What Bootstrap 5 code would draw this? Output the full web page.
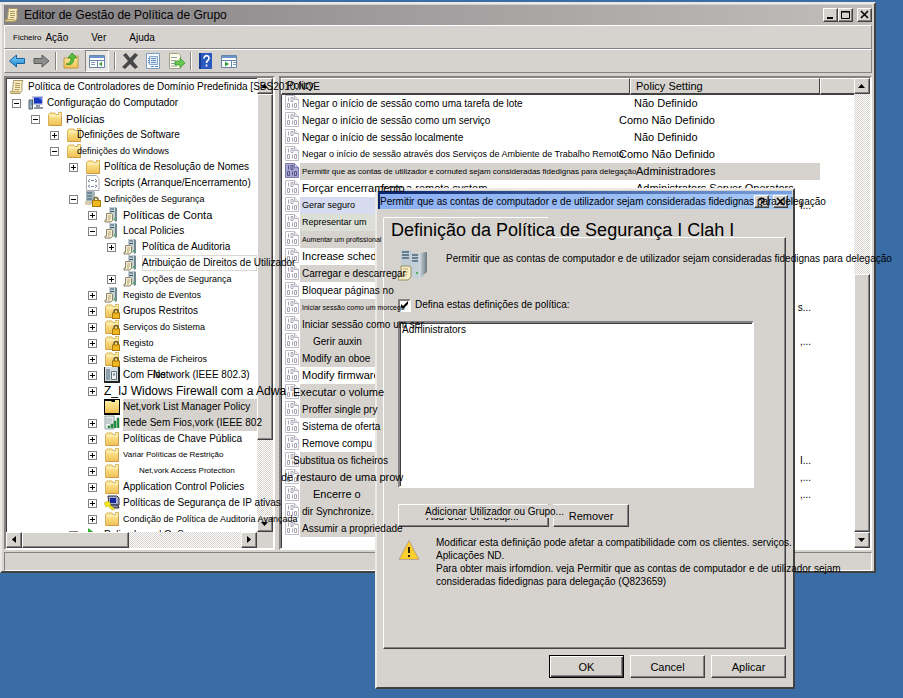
<!DOCTYPE html>
<html lang="pt">
<head>
<meta charset="utf-8">
<meta name="viewport" content="width=device-width, initial-scale=1">
<title>Editor de Gestão de Política de Grupo</title>
<link href="https://cdn.jsdelivr.net/npm/bootstrap@5.3.0/dist/css/bootstrap.min.css" rel="stylesheet">
<style>
:root{--face:#d6d3ce;--dark:#424142;--mid:#848284}
body{background:#3a6da5;font:10px/16px "Liberation Sans",Arial,sans-serif;color:#000;overflow:hidden}
.desktop{min-height:100vh}
.t7{font-size:7px}.t8{font-size:8px}.t9{font-size:9px}.t11{font-size:11px}.t12{font-size:12px}
.over{position:relative;z-index:3}
.grow-0w{flex:1 1 0;width:0;min-width:0}
.raised{background:var(--face);border:1px solid;border-color:#fff var(--dark) var(--dark) #fff;box-shadow:inset -1px -1px 0 var(--mid)}
.sunken{border:2px solid;border-color:var(--mid) #fff #fff var(--mid);box-shadow:inset 1px 1px 0 var(--dark)}
.win{background:var(--face);border:2px solid;border-color:#eceae6 var(--dark) var(--dark) #eceae6}
.main-win{inset:2px 27px 125px 0;padding:0 2px}
.main-title{height:20px;margin-top:1px;background:linear-gradient(90deg,#848184,#c1bdbb)}
.sysbtn{width:15px;height:14px;padding:0;line-height:0}
.bar-strip{height:24px;border:1px solid;border-color:#fff var(--mid) var(--mid) #fff}
.bar-strip button{border:0;background:none;padding:0;color:#000}
.menu-strip{gap:23px;padding-top:2px}
.tool-strip{gap:5px}
.tool-strip svg{width:18px;height:18px;display:block}
.tool-strip .pressed{border:1px solid;border-color:var(--mid) #fff #fff var(--mid);background:#eae8e5;padding:1px 2px}
.vsep{width:2px;height:18px;border-left:1px solid var(--mid);border-right:1px solid #fff}
.panes{min-height:0;gap:4px;margin-top:3px}
.tree-pane{flex:0 0 271px;min-width:0;background:#fff}
.tree-body{min-height:0}
.list-pane{background:#fff}
.tree-view{overflow-x:visible;overflow-y:clip;min-height:0;padding-top:1px}
.tree-view ul{list-style:none;margin:0;padding:0 0 0 19px}
.tree-view>ul{padding-left:6px}
.tree-row{display:flex;align-items:center;height:16px;white-space:nowrap}
.tree-root{padding-left:3px}
.tree-row svg{width:16px;height:16px;margin-right:3px;flex:none}
.expander{width:9px;height:9px;padding:0;margin-right:7px;flex:none;border:1px solid #848284;background:#fff;display:flex}
.tree-row .expander svg{width:7px;height:7px;margin:0}
.leaf{padding-left:16px}
.tuck{margin-left:-8px}
.chip{background:#d6d3ce;flex:1 1 0;min-width:0}
.chosen{flex:1 1 0;min-width:0;outline:1px solid #dcd9d4;outline-offset:-1px}
.stub{display:inline-block;width:30px}
.stub-wide{display:inline-block;width:79px}
.track{background:repeating-conic-gradient(#fff 0 25%,#d6d3ce 0 50%) 0 0/2px 2px}
.sbtn{width:16px;height:16px;padding:0;flex:none;display:flex;align-items:center;justify-content:center}
.vbar{width:16px;flex:none}
.corner-row{background:var(--face)}
.status-strip{height:19px;margin-top:2px;border:1px solid;border-color:var(--mid) #fff #fff var(--mid)}
.pol{table-layout:fixed;width:100%;margin:0;border-collapse:separate;border-spacing:0}
.pol th{height:17px;line-height:14px;font-weight:400;background:var(--face);padding:0 5px;border:solid;border-width:1px 1px 2px;border-color:#fff var(--dark) var(--dark) #fff}
.pol th:last-child{border-right:0}
.pol td{height:17px;padding:0 0 0 4px;line-height:17px;white-space:nowrap;vertical-align:top}
.pol td:nth-child(3){padding:0}
.pol .cell{display:flex;height:17px}
.pol .cell svg{width:14px;height:15px;margin-right:1px;flex:none}
.pol .cell>span{flex:1;padding-left:2px;min-width:0;height:17px}
.pol .cell>.tint{background:#d6d3ce}.pol .cell>.tint-blue{background:#d6dbef}.pol .cell>.tint-green{background:#dcdfd6}
.pol .cell>.inset-more{padding-left:13px}
.ml-out{margin-left:-9px}.ml-far{margin-left:-21px}
.col-wide{width:349px}.col-set{width:190px}
.pol .lead-in{padding-left:6px}.pol .lead-out{text-indent:-15px}
.pol .tail{text-align:right;padding-right:9px}
.selcell{background:#d6d3ce}
.dlg{left:375px;top:188px;width:420px;z-index:2;padding:1px 1px 9px}
.dlg-title{height:18px;border-top:3px solid #16388c;border-left:2px solid #0a246a;border-image:linear-gradient(90deg,#0a246a,#7ba2e0) 3 0 0 2;background:linear-gradient(90deg,#8cb0f4,#a6c8f5);white-space:nowrap}
.dlg-title .sysbtn{height:13px}
.dlg-body{padding:8px 6px 0 5px}
.tab-head{height:20px;width:165px;border:solid #fff;border-width:1px 0 0 1px;font-size:18px;line-height:24px;padding-left:7px;white-space:nowrap;border-top-left-radius:2px}
.tab-page{border:1px solid;border-color:#fff var(--dark) var(--dark) #fff;box-shadow:inset -1px -1px 0 var(--mid);padding:11px 31px 60px 14px}
.tab-cover{border-top:1px solid var(--face);width:164px;margin:-12px 0 11px -14px}
.desc{line-height:20px}
.check-real{appearance:none;width:13px;height:13px;margin:0;border:2px solid;border-color:var(--mid) #fff #fff var(--mid);background:#fff}
.check-real:checked{background:#fff url("data:image/svg+xml,%3Csvg xmlns='http://www.w3.org/2000/svg' viewBox='0 0 9 9'%3E%3Cpath d='M1 3v3l2 2 5-5V0L3 5z'/%3E%3C/svg%3E") center/9px no-repeat}
.members{height:167px;display:block;width:100%;background:#fff;padding:1px 2px;font-size:10px;overflow:hidden;border-radius:0;outline:0}
.members option{padding:0;line-height:15px;min-height:15px;color:#000}
.btn95{height:23px;padding:0;color:#000;line-height:20px;font-size:11px}
.btn-add{width:151px;font-size:10px}.btn-rem{width:76px}.btn-act{width:75px}
.add-old{display:block;padding-top:2px;padding-right:2px}
.add-new{position:absolute;left:26px;top:0;height:13px;line-height:13px;background:var(--face);white-space:nowrap}
.default{border:1px solid #000;box-shadow:inset 1px 1px 0 #fff,inset -1px -1px 0 var(--dark),inset -2px -2px 0 var(--mid)}
.note{line-height:13px;white-space:nowrap;padding-top:1px}
.dlg-foot{gap:6px;margin-top:6px}
</style>
</head>
<body>
<svg width="0" height="0" class="position-absolute" aria-hidden="true">
<defs>
<linearGradient id="gf" x1="0" y1="0" x2="0" y2="1"><stop offset="0" stop-color="#fff0a8"/><stop offset="1" stop-color="#f0c050"/></linearGradient>
<linearGradient id="gb" x1="0" y1="0" x2="0" y2="1"><stop offset="0" stop-color="#7fd0f8"/><stop offset="1" stop-color="#1c84d0"/></linearGradient>
<linearGradient id="gs" x1="0" y1="0" x2="1" y2="0"><stop offset="0" stop-color="#d8e0e6"/><stop offset="1" stop-color="#687880"/></linearGradient>
</defs>
<symbol id="folder" viewBox="0 0 16 16"><path d="M1.500 3.500 3 2h5l1 1.500h2.500V1.500h3V14.500h-13z" fill="url(#gf)" stroke="#d8b058"/><path d="M12 2.500h2M2.500 5h12" stroke="#fff6cc"/><path d="M14.500 5v9.500h-12" fill="none" stroke="#c89c48"/></symbol>
<symbol id="lockfolder" viewBox="0 0 16 16"><use href="#folder"/><path d="M10 10V8.500a2 2 0 0 1 4 0V10" fill="none" stroke="#6a5a20" stroke-width="1.500"/><rect x="8.500" y="10" width="7" height="5.500" fill="#f0b820" stroke="#a87808"/></symbol>
<symbol id="server" viewBox="0 0 16 16"><path d="M5 0h6v14H5z" fill="#c4d0d6"/><path d="M11 0l2 1v13l-2 1z" fill="#708890"/><path d="M6 2h4M6 4.500h4" stroke="#38586c"/><path d="M10 12h2" stroke="#50b060" stroke-width="2"/><path d="M2.500 6.500h5l1 1v6l-1.500 1.500h-6v-2h1.500z" fill="#f8f0d4" stroke="#8a8468"/><path d="M4 9h3M4 11h3M4 13h2" stroke="#b0a070"/></symbol>
<symbol id="servlock" viewBox="0 0 16 16"><path d="M1 0h8l1 1v12H1z" fill="#a8b8c0"/><path d="M2 2h5M2 5h5M2 8h5" stroke="#38586c"/><path d="M0 10h6v4H0z" fill="#d8ccb0"/><path d="M9 10V8.500a2 2 0 0 1 4 0V10" fill="none" stroke="#7a6420" stroke-width="1.500"/><rect x="7.500" y="9.500" width="8" height="6" fill="#f0b820" stroke="#a87808"/></symbol>
<symbol id="scroll" viewBox="0 0 16 16"><path d="M4.500 1.500h9.500l-1 2v8l-2 3H2l1.500-3z" fill="#f8ecc4" stroke="#a89868"/><path d="M6 4.500h5M6 6.500h5M6 8.500h5M5.500 10.500h5" stroke="#b09858"/><path d="M1 12.500h9v2H2z" fill="#e8d498" stroke="#a08c50" stroke-width=".7"/></symbol>
<symbol id="pc" viewBox="0 0 16 16"><path d="M4 1h11v9H4z" fill="#c4c8e0"/><path d="M6 2.500h8v6H6z" fill="#1838c0"/><path d="M10 2.500h4v3z" fill="#5880f0"/><path d="M8 10h4v2H8zM6 12h9v2H6z" fill="#9098a8"/><path d="M1 5h3.500v9H1z" fill="#a8b4bc" stroke="#50606c"/><path d="M2 7h2M2 9h2" stroke="#308cc0"/></symbol>
<symbol id="script" viewBox="0 0 16 16"><path d="M1.500.5h10l2.500 3v12H1.500z" fill="#fff" stroke="#a8acb0"/><path d="M3 6l2-2M3 6l2 1M12 6l-2-2M12 6l-2 1M6 5.500h3M3 11l2-1M3 11l2 2M12 11l-2-1M12 11l-2 2M6 11.500h3" stroke="#8088a8" fill="none"/></symbol>
<symbol id="netcard" viewBox="0 0 16 16"><path d="M0 0h16v16H0z" fill="#222"/><path d="M1 0h13v14H1z" fill="#d4dce0"/><path d="M2 2h4v11H2z" fill="#8ca0ac"/><path d="M7.500 4.500h5v8h-5z" fill="#eef2f4" stroke="#607480"/><path d="M9 6.500h2v2H9z" fill="#70889c"/></symbol>
<symbol id="bfolder" viewBox="0 0 16 16"><path d="M0 0h16v16H0z"/><path d="M1 2h6l1 1h3V1h4v13H1z" fill="url(#gf)"/></symbol>
<symbol id="wifi" viewBox="0 0 16 16"><path d="M1 1h9v13H1z" fill="#e8ecec" stroke="#90a0a0"/><path d="M2 4h6M2 6h6M2 8h5" stroke="#a0b0b0"/><path d="M4 13V11h2v2M7 13V9h2v4M10 13V6h2v7M13 13V3h2v10" fill="#289848" stroke="#187030" stroke-width=".5"/></symbol>
<symbol id="ipsec" viewBox="0 0 16 16"><path d="M4 1h9l2 2v7H5z" fill="#a8acc8" stroke="#303040"/><path d="M6 3h6v5H6z" fill="#1828a0"/><path d="M6 10h8l1 3H7z" fill="#8890a0" stroke="#303040"/><path d="M0 8l4-2 3 3-1 1 5 4-3 1-4-4-2 1z" fill="#f4e420" stroke="#b0a010" stroke-width=".5"/></symbol>
<symbol id="cert" viewBox="0 0 16 16"><path d="M3 1v12l8-6z" fill="#30b030"/></symbol>
<symbol id="bits" viewBox="0 0 14 15"><path d="M.5.5h9l4 4v10H.5z" fill="#fff" stroke="#c0bcc8"/><path d="M9.500.5v4h4" fill="#eeecf2" stroke="#b4b0bc"/><path d="M3.500 2.500v4M6 2.500h2v4H6zM2.500 8.500h2v4h-2zM7.500 8.500v4M9.500 8.500h2v4h-2z" fill="none" stroke="#a8a4b4"/></symbol>
<symbol id="bits-on" viewBox="0 0 14 15"><path d="M.5.5h9l4 4v10H.5z" fill="#a8a8d0" stroke="#7c7cac"/><path d="M9.500.5v4h4" fill="#c8c8e4" stroke="#7c7cac"/><path d="M3.500 2.500v4M6 2.500h2v4H6zM2.500 8.500h2v4h-2zM7.500 8.500v4M9.500 8.500h2v4h-2z" fill="none" stroke="#54548c"/></symbol>
<symbol id="plus" viewBox="0 0 7 7"><path d="M1 3.500h5M3.500 1v5" stroke="#000"/></symbol>
<symbol id="minus" viewBox="0 0 7 7"><path d="M1 3.500h5" stroke="#000"/></symbol>
</svg>

<div class="desktop position-relative">
<main class="win main-win position-absolute d-flex flex-column">
  <header class="main-title d-flex align-items-center flex-shrink-0">
    <svg width="16" height="16" class="me-1"><use href="#scroll"/></svg>
    <h1 class="t12 m-0 fw-normal flex-grow-1">Editor de Gestão de Política de Grupo</h1>
    <button class="raised sysbtn" aria-label="Minimizar"><svg width="11" height="10"><path d="M2 8h6" stroke="#000" stroke-width="2"/></svg></button>
    <button class="raised sysbtn me-1" aria-label="Maximizar"><svg width="11" height="10"><path d="M1.500 1.500h8v7h-8zM1 2h9" fill="none" stroke="#000"/></svg></button>
    <button class="raised sysbtn" aria-label="Fechar"><svg width="11" height="10"><path d="M2 1l7 7M9 1L2 8" stroke="#000" stroke-width="1.500"/></svg></button>
  </header>
  <nav class="bar-strip menu-strip d-flex align-items-center ps-2 flex-shrink-0">
    <div class="d-flex gap-1"><button class="t8 lh-1">Ficheiro</button><button>Ação</button></div>
    <button>Ver</button><button>Ajuda</button>
  </nav>
  <div class="bar-strip tool-strip d-flex align-items-center px-1 flex-shrink-0">
    <button aria-label="Anterior"><svg viewBox="0 0 18 18"><path d="M.5 9l7-6v3.500h8v5h-8V15z" fill="url(#gb)" stroke="#1464a4"/></svg></button>
    <button aria-label="Seguinte"><svg viewBox="0 0 18 18"><path d="M17 9l-7-6v3.500H2v5h8V15z" fill="#8c8c8c" stroke="#5a5a5a"/></svg></button>
    <span class="vsep"></span>
    <button aria-label="Subir um nível"><svg viewBox="0 0 18 18"><path d="M2 6h6l1-2h7v12H2z" fill="url(#gf)" stroke="#c09840"/><path d="M4 12c3 0 5-2 5-6H6l4-5 5 5h-3c0 5-3 8-8 6z" fill="#58c040" stroke="#2c8420" stroke-width=".7"/></svg></button>
    <button class="pressed" aria-label="Mostrar árvore"><svg viewBox="0 0 18 18"><path d="M1.500 3.500h15v12h-15z" fill="#fff" stroke="#6884a8"/><path d="M2 4h14v2H2z" fill="#6c94cc"/><path d="M2 8.500h14M9.500 8v7" stroke="#6884a8"/><path d="M3 10.500h4M3 12.500h4" stroke="#8098b8"/><path d="M14 9.500v5l-3-2.500z" fill="#30a030"/></svg></button>
    <span class="vsep"></span>
    <button aria-label="Eliminar"><svg viewBox="0 0 18 18"><path d="M2 3l3-2 4 5 5-5 3 2-5 6 5 6-3 2-5-5-5 5-3-2 6-6z" fill="#484848"/></svg></button>
    <button aria-label="Propriedades"><svg viewBox="0 0 18 18"><path d="M2.500 1.500h13v15h-13z" fill="#f6faff" stroke="#7c9cc0"/><path d="M5.500 4.500h8v8h-8z" fill="#e0ecf8" stroke="#88a8cc"/><path d="M4 6.500h2M7 6.500h5M4 8.500h2M7 8.500h5M4 10.500h2M7 10.500h5M7 14.500h3M11 14.500h3" stroke="#6890bc"/></svg></button>
    <button aria-label="Exportar"><svg viewBox="0 0 18 18"><path d="M2.500 1.500h9l2 2v13h-11z" fill="#fffce8" stroke="#a0a090"/><path d="M4 5.500h6M4 8.500h4M4 11.500h4M4 14h6" stroke="#90a0a8"/><path d="M8 9h5V6l5 5-5 5v-3H8z" fill="#68c850" stroke="#2c8c20" stroke-width=".7"/></svg></button>
    <span class="vsep"></span>
    <button aria-label="Ajuda"><svg viewBox="0 0 18 18"><path d="M2 1h13v16H2z" fill="#2858c0"/><path d="M2 1h2v16H2z" fill="#163890"/><path d="M7 6.500c0-4 5.500-3.500 5 0-.2 2-2.500 2-2.500 4.500M9.500 12.500v2" fill="none" stroke="#fff" stroke-width="1.700"/></svg></button>
    <button aria-label="Mostrar painel"><svg viewBox="0 0 18 18"><path d="M1.500 3.500h15v12h-15z" fill="#fff" stroke="#6884a8"/><path d="M2 4h14v2H2z" fill="#6c94cc"/><path d="M2 8.500h14M11.500 8v7" stroke="#6884a8"/><path d="M13 10.500h3M13 12.500h3" stroke="#8098b8"/><path d="M5 9.500v5l4-2.500z" fill="#30a030"/></svg></button>
  </div>

  <div class="panes d-flex flex-grow-1">
    <section class="tree-pane sunken d-flex flex-column">
      <div class="tree-body d-flex flex-grow-1">
      <div class="tree-view grow-0w">
        <div class="tree-row tree-root"><svg><use href="#scroll"/></svg><span class="over">Política de Controladores de Domínio Predefinida [SBS2010.NOE</span></div>
        <ul><li><div class="tree-row"><button class="expander" aria-label="Fechar"><svg><use href="#minus"/></svg></button><svg><use href="#pc"/></svg>Configuração do Computador</div>
        <ul><li><div class="tree-row t11"><button class="expander" aria-label="Fechar"><svg><use href="#minus"/></svg></button><svg><use href="#folder"/></svg>Polícias</div>
        <ul>
          <li><div class="tree-row"><button class="expander" aria-label="Abrir"><svg><use href="#plus"/></svg></button><svg><use href="#folder"/></svg><span class="tuck over">Definições de Software</span></div></li>
          <li><div class="tree-row t9"><button class="expander" aria-label="Fechar"><svg><use href="#minus"/></svg></button><svg><use href="#folder"/></svg><span class="tuck over">definições do Windows</span></div>
          <ul>
            <li><div class="tree-row"><button class="expander" aria-label="Abrir"><svg><use href="#plus"/></svg></button><svg><use href="#folder"/></svg>Política de Resolução de Nomes</div></li>
            <li><div class="tree-row leaf"><svg><use href="#script"/></svg>Scripts (Arranque/Encerramento)</div></li>
            <li><div class="tree-row t9"><button class="expander" aria-label="Fechar"><svg><use href="#minus"/></svg></button><svg><use href="#servlock"/></svg>Definições de Segurança</div>
            <ul>
              <li><div class="tree-row t11"><button class="expander" aria-label="Abrir"><svg><use href="#plus"/></svg></button><svg><use href="#server"/></svg>Políticas de Conta</div></li>
              <li><div class="tree-row"><button class="expander" aria-label="Fechar"><svg><use href="#minus"/></svg></button><svg><use href="#server"/></svg>Local Policies</div>
              <ul>
                <li><div class="tree-row"><button class="expander" aria-label="Abrir"><svg><use href="#plus"/></svg></button><svg><use href="#server"/></svg>Política de Auditoria</div></li>
                <li><div class="tree-row leaf"><svg><use href="#server"/></svg><span class="chosen"><span class="over">Atribuição de Direitos de Utilizador</span></span></div></li>
                <li><div class="tree-row t9"><button class="expander" aria-label="Abrir"><svg><use href="#plus"/></svg></button><svg><use href="#server"/></svg>Opções de Segurança</div></li>
              </ul></li>
              <li><div class="tree-row t9"><button class="expander" aria-label="Abrir"><svg><use href="#plus"/></svg></button><svg><use href="#server"/></svg>Registo de Eventos</div></li>
              <li><div class="tree-row"><button class="expander" aria-label="Abrir"><svg><use href="#plus"/></svg></button><svg><use href="#lockfolder"/></svg>Grupos Restritos</div></li>
              <li><div class="tree-row t9"><button class="expander" aria-label="Abrir"><svg><use href="#plus"/></svg></button><svg><use href="#lockfolder"/></svg>Serviços do Sistema</div></li>
              <li><div class="tree-row t9"><button class="expander" aria-label="Abrir"><svg><use href="#plus"/></svg></button><svg><use href="#lockfolder"/></svg>Registo</div></li>
              <li><div class="tree-row t9"><button class="expander" aria-label="Abrir"><svg><use href="#plus"/></svg></button><svg><use href="#lockfolder"/></svg>Sistema de Ficheiros</div></li>
              <li><div class="tree-row"><button class="expander" aria-label="Abrir"><svg><use href="#plus"/></svg></button><svg><use href="#netcard"/></svg><span class="stub">Com Fios</span><span>Network (IEEE 802.3)</span></div></li>
              <li><div class="tree-row t12"><button class="expander" aria-label="Abrir"><svg><use href="#plus"/></svg></button><span class="over">Z_IJ Widows Firewall com a Adwa</span></div></li>
              <li><div class="tree-row leaf"><svg><use href="#bfolder"/></svg><span class="chip">Net,vork List Manager Policy</span></div></li>
              <li><div class="tree-row"><button class="expander" aria-label="Abrir"><svg><use href="#plus"/></svg></button><svg><use href="#wifi"/></svg><span class="chip"><span class="over">Rede Sem Fios,vork (IEEE 802</span></span></div></li>
              <li><div class="tree-row"><button class="expander" aria-label="Abrir"><svg><use href="#plus"/></svg></button><svg><use href="#folder"/></svg>Políticas de Chave Pública</div></li>
              <li><div class="tree-row t8"><button class="expander" aria-label="Abrir"><svg><use href="#plus"/></svg></button><svg><use href="#folder"/></svg>Variar Políticas de Restrição</div></li>
              <li><div class="tree-row t8"><button class="expander" aria-label="Abrir"><svg><use href="#plus"/></svg></button><svg><use href="#folder"/></svg><span class="ms-3">Net,vork Access Protection</span></div></li>
              <li><div class="tree-row"><button class="expander" aria-label="Abrir"><svg><use href="#plus"/></svg></button><svg><use href="#folder"/></svg>Application Control Policies</div></li>
              <li><div class="tree-row"><button class="expander" aria-label="Abrir"><svg><use href="#plus"/></svg></button><svg><use href="#ipsec"/></svg><span class="over">Políticas de Segurança de IP ativas</span></div></li>
              <li><div class="tree-row t9"><button class="expander" aria-label="Abrir"><svg><use href="#plus"/></svg></button><svg><use href="#folder"/></svg><span class="over">Condição de Política de Auditoria Avançada</span></div></li>
            </ul></li>
            <li><div class="tree-row"><button class="expander" aria-label="Abrir"><svg><use href="#plus"/></svg></button><svg><use href="#cert"/></svg>Policy-based QoS</div></li>
          </ul></li>
        </ul></li></ul></li></ul>
      </div>
      <div class="vbar track d-flex flex-column">
        <button class="raised sbtn" aria-label="Acima"><svg width="8" height="5"><path d="M0 4h7L3.500 0z"/></svg></button>
        <div class="flex-grow-1"><div class="raised" style="height:82%"></div></div>
        <button class="raised sbtn" aria-label="Abaixo"><svg width="8" height="5"><path d="M0 0h7L3.500 4z"/></svg></button>
      </div>
      </div>
      <div class="corner-row d-flex flex-shrink-0">
        <div class="track d-flex flex-grow-1">
          <button class="raised sbtn" aria-label="Esquerda"><svg width="5" height="8"><path d="M4 0v7L0 3.500z"/></svg></button>
          <div class="flex-grow-1"><div class="raised h-100" style="width:49%"></div></div>
          <button class="raised sbtn" aria-label="Direita"><svg width="5" height="8"><path d="M0 0v7l4-3.500z"/></svg></button>
        </div>
        <div class="vbar"></div>
      </div>
    </section>

    <section class="list-pane sunken d-flex grow-0w">
      <div class="grow-0w">
      <table class="pol">
        <colgroup><col class="col-wide"><col class="col-set"><col></colgroup>
        <thead><tr><th>Policy</th><th class="t11">Policy Setting</th><th aria-label="Extra"></th></tr></thead>
        <tbody>
        <tr><td><div class="cell"><svg><use href="#bits"/></svg><span>Negar o início de sessão como uma tarefa de lote</span></div></td><td class="t11">Não Definido</td><td></td></tr>
        <tr><td><div class="cell"><svg><use href="#bits"/></svg><span>Negar o início de sessão como um serviço</span></div></td><td class="t11 lead-out">Como Não Definido</td><td></td></tr>
        <tr><td><div class="cell"><svg><use href="#bits"/></svg><span>Negar o início de sessão localmente</span></div></td><td class="t11">Não Definido</td><td></td></tr>
        <tr><td><div class="cell t9"><svg><use href="#bits"/></svg><span>Negar o início de sessão através dos Serviços de Ambiente de Trabalho Remoto</span></div></td><td class="t11 lead-out">Como Não Definido</td><td></td></tr>
        <tr><td><div class="cell t8"><svg><use href="#bits-on"/></svg><span class="tint">Permitir que as contas de utilizador e cornuted sejam consideradas fidedignas para delegação</span></div></td><td class="t11 selcell lead-in">Administradores</td><td></td></tr>
        <tr><td><div class="cell t11"><svg><use href="#bits"/></svg><span><span class="over stub-wide">Forçar encerramento</span>from a remote system</span></div></td><td class="t11 lead-in">Administrators Server Operators</td><td></td></tr>
        <tr><td><div class="cell t9"><svg><use href="#bits"/></svg><span class="tint-blue">Gerar seguro</span></div></td><td class="tail">I...</td><td></td></tr>
        <tr><td><div class="cell t9"><svg><use href="#bits"/></svg><span class="tint-green">Representar um</span></div></td><td></td><td></td></tr>
        <tr><td><div class="cell t7"><svg><use href="#bits"/></svg><span class="tint"><span class="over">Aumentar um profissional</span></span></div></td><td></td><td></td></tr>
        <tr><td><div class="cell t11"><svg><use href="#bits"/></svg><span>Increase sched</span></div></td><td></td><td></td></tr>
        <tr><td><div class="cell"><svg><use href="#bits"/></svg><span class="tint"><span class="over">Carregar e descarregar</span></span></div></td><td></td><td></td></tr>
        <tr><td><div class="cell"><svg><use href="#bits"/></svg><span><span class="over">Bloquear páginas no</span></span></div></td><td></td><td></td></tr>
        <tr><td><div class="cell t7"><svg><use href="#bits"/></svg><span class="tint"><span class="over">Iniciar sessão como um morcego</span></span></div></td><td class="tail">s...</td><td></td></tr>
        <tr><td><div class="cell"><svg><use href="#bits"/></svg><span class="tint"><span class="over">Iniciar sessão como um ser</span></span></div></td><td></td><td></td></tr>
        <tr><td><div class="cell"><svg><use href="#bits"/></svg><span class="tint inset-more">Gerir auxin</span></div></td><td class="tail">,...</td><td></td></tr>
        <tr><td><div class="cell"><svg><use href="#bits"/></svg><span class="tint">Modify an oboe</span></div></td><td></td><td></td></tr>
        <tr><td><div class="cell t11"><svg><use href="#bits"/></svg><span>Modify firmware</span></div></td><td></td><td></td></tr>
        <tr><td><div class="cell t11"><svg><use href="#bits"/></svg><span class="tint"><span class="over ml-out">Executar o volume</span></span></div></td><td></td><td></td></tr>
        <tr><td><div class="cell"><svg><use href="#bits"/></svg><span class="tint"><span class="over">Proffer single pry</span></span></div></td><td></td><td></td></tr>
        <tr><td><div class="cell"><svg><use href="#bits"/></svg><span><span class="over">Sistema de oferta</span></span></div></td><td></td><td></td></tr>
        <tr><td><div class="cell"><svg><use href="#bits"/></svg><span>Remove compu</span></div></td><td></td><td></td></tr>
        <tr><td><div class="cell"><svg><use href="#bits"/></svg><span class="tint"><span class="over ml-out">Substitua os ficheiros</span></span></div></td><td class="tail">I...</td><td></td></tr>
        <tr><td><div class="cell t11"><svg><use href="#bits"/></svg><span class="tint"><span class="over ml-far">de restauro de uma prow</span></span></div></td><td class="tail">,...</td><td></td></tr>
        <tr><td><div class="cell t11"><svg><use href="#bits"/></svg><span class="tint inset-more">Encerre o</span></div></td><td class="tail">,...</td><td></td></tr>
        <tr><td><div class="cell"><svg><use href="#bits"/></svg><span class="tint">dir Synchronize.</span></div></td><td></td><td></td></tr>
        <tr><td><div class="cell"><svg><use href="#bits"/></svg><span class="tint"><span class="over">Assumir a propriedade</span></span></div></td><td></td><td></td></tr>
        </tbody>
      </table>
      </div>
      <div class="vbar track d-flex flex-column">
        <button class="raised sbtn" aria-label="Acima"><svg width="8" height="5"><path d="M0 4h7L3.500 0z"/></svg></button>
        <div class="flex-grow-1 d-flex flex-column justify-content-end"><div class="raised" style="height:59%"></div></div>
        <button class="raised sbtn" aria-label="Abaixo"><svg width="8" height="5"><path d="M0 0h7L3.500 4z"/></svg></button>
      </div>
    </section>
  </div>
  <footer class="status-strip flex-shrink-0"></footer>
</main>

<section class="win dlg position-absolute" role="dialog" aria-label="Definição da Política de Segurança">
  <header class="dlg-title d-flex align-items-center">
    <span class="over grow-0w">Permitir que as contas de computador e de utilizador sejam consideradas fidedignas para delegação</span>
    <button class="raised sysbtn me-1" aria-label="Ajuda"><svg width="11" height="10"><path d="M3 3.500C3 .5 8 .5 8 3.500 8 5 5.500 5 5.500 6.500M5.500 8v1.500" fill="none" stroke="#000" stroke-width="1.500"/></svg></button>
    <button class="raised sysbtn me-1" aria-label="Fechar"><svg width="11" height="10"><path d="M2 1l7 7M9 1L2 8" stroke="#000" stroke-width="1.500"/></svg></button>
  </header>
  <div class="dlg-body">
    <h2 class="tab-head m-0 fw-normal">Definição da Política de Segurança I Clah I</h2>
    <div class="tab-page">
      <div class="tab-cover"></div>
      <div class="d-flex">
        <svg width="32" height="32" viewBox="0 0 32 32" class="flex-shrink-0 me-3"><path d="M3 1h9l2 1v22H3z" fill="#c2ced6"/><path d="M4 3h7M4 6h7M4 9h7" stroke="#4c6474" stroke-width="1.500"/><path d="M13 4h8v26l-8-2z" fill="#c4d0d8"/><path d="M21 4l8-1v20l-8 7z" fill="url(#gs)"/><path d="M14 6h6M14 9h6M14 12h6" stroke="#4c6474" stroke-width="1.500"/><path d="M18 24h2" stroke="#50b060" stroke-width="2"/><path d="M3 17h8l2 1v10l-3 3H0l1-4h2z" fill="#f6ecc8" stroke="#98905c"/><path d="M5 20h5M5 23h5M4 26h5" stroke="#b8a468"/></svg>
        <span class="desc text-nowrap">Permitir que as contas de computador e de utilizador sejam consideradas fidedignas para delegação</span>
      </div>
      <div class="d-flex align-items-center mt-3 gap-1"><input type="checkbox" class="check-real" id="def" checked><label for="def" class="text-nowrap">Defina estas definições de política:</label></div>
      <select multiple class="members sunken mt-2" aria-label="Membros"><option>Administrators</option></select>
      <div class="d-flex mt-3 gap-1">
        <button class="raised btn95 btn-add position-relative"><span class="add-old">Add User or Group...</span><span class="add-new">Adicionar Utilizador ou Grupo...</span></button>
        <button class="raised btn95 btn-rem">Remover</button>
      </div>
      <div class="d-flex mt-2">
        <svg width="22" height="22" viewBox="0 0 22 22" class="flex-shrink-0 mt-1 me-3"><path d="M11 1.500L21 20.500H1z" fill="#fcc41c" stroke="#b8a890" stroke-linejoin="round"/><path d="M11 4L19 19.500H3z" fill="#fcd030"/><path d="M11 8v6M11 16v2" stroke="#302000" stroke-width="2"/></svg>
        <p class="note mb-0">Modificar esta definição pode afetar a compatibilidade com os clientes. serviços.<br>Aplicações ND.<br>Para obter mais irfomdion. veja Permitir que as contas de computador e de utilizador sejam<br>consideradas fidedignas para delegação (Q823659)</p>
      </div>
    </div>
    <div class="dlg-foot d-flex justify-content-end">
      <button class="raised default btn95 btn-act">OK</button>
      <button class="raised btn95 btn-act">Cancel</button>
      <button class="raised btn95 btn-act">Aplicar</button>
    </div>
  </div>
</section>
</div>
</body>
</html>
